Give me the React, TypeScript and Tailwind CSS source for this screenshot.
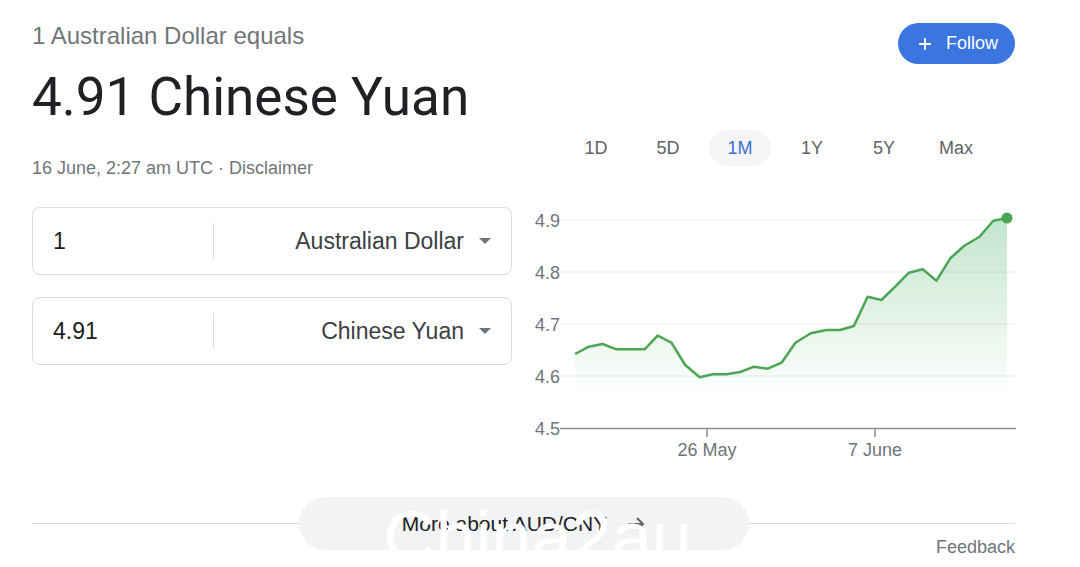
import { Plus } from "lucide-react";

const SANS = "font-['Liberation_Sans',Arial,sans-serif]";

const TABS = ["1D", "5D", "1M", "1Y", "5Y", "Max"] as const;

// chart points in svg space (page x - 520, page y - 200)
const POINTS: [number, number][] = [
  [55.1, 154], [68.8, 146.7], [82.6, 144], [96.4, 149.3], [110.1, 149.3],
  [124.6, 149.3], [137.7, 135.7], [151.4, 142.7], [165.2, 165], [179.7, 177.3],
  [192.8, 174.3], [206.5, 174.3], [220.3, 172], [234.1, 166.7], [247.8, 168.7],
  [261.6, 162.7], [275.4, 142.7], [290.8, 133.3], [306.3, 130], [320.1, 130],
  [333.9, 126], [347.6, 96.7], [361.4, 100], [375.2, 86.7], [388.9, 72.7],
  [402.7, 69.3], [416.5, 80.7], [430.3, 58.3], [444, 46], [459.5, 36.7],
  [473.3, 20.7], [487, 18],
];

const Y_LABELS = [
  { label: "4.9", y: 20 },
  { label: "4.8", y: 72 },
  { label: "4.7", y: 124 },
  { label: "4.6", y: 176 },
  { label: "4.5", y: 228 },
];

function Caret() {
  return (
    <svg width="12" height="6" viewBox="0 0 12 6" className="shrink-0">
      <path d="M0 0h12L6 6z" fill="#70757a" />
    </svg>
  );
}

function CurrencyRow({ amount, currency }: { amount: string; currency: string }) {
  return (
    <div className="flex h-[68px] items-center rounded-lg border border-[#dadce0]">
      <div className="w-[180px] pl-5 text-[23px] text-[#202124]">{amount}</div>
      <div className="h-9 w-px bg-[#dadce0]" />
      <div className="flex flex-1 items-center justify-end gap-[15px] pr-[20px]">
        <span className="text-[23px] text-[#3c4043]">{currency}</span>
        <Caret />
      </div>
    </div>
  );
}

function Chart() {
  const line = POINTS.map(([x, y], i) => `${i ? "L" : "M"}${x} ${y}`).join(" ");
  const area = `${line} L487 197 L55.1 197 Z`;
  const last = POINTS[POINTS.length - 1];
  return (
    <svg
      width={496}
      height={265}
      viewBox="0 0 496 265"
      className="mt-[34px] ml-2 block"
      fontFamily="'Liberation Sans', Arial, sans-serif"
    >
      <defs>
        <linearGradient id="area" x1="0" y1="18" x2="0" y2="197" gradientUnits="userSpaceOnUse">
          <stop offset="0" stopColor="#34a853" stopOpacity="0.3" />
          <stop offset="1" stopColor="#34a853" stopOpacity="0" />
        </linearGradient>
      </defs>
      {Y_LABELS.slice(0, 4).map((g) => (
        <line key={g.label} x1={40} x2={496} y1={g.y} y2={g.y} stroke="#f1f3f4" strokeWidth={1.5} />
      ))}
      {Y_LABELS.map((g) => (
        <text key={g.label} x={15} y={g.y + 6.5} fontSize={18} fill="#70757a">
          {g.label}
        </text>
      ))}
      <path d={area} fill="url(#area)" />
      <path d={line} fill="none" stroke="#4ca654" strokeWidth={2.5} strokeLinejoin="round" />
      <circle cx={last[0]} cy={last[1]} r={5.5} fill="#4ca654" />
      <line x1={40} x2={496} y1={228.5} y2={228.5} stroke="#8a8e93" strokeWidth={1.5} />
      <line x1={187} x2={187} y1={228} y2={237} stroke="#8a8e93" strokeWidth={1.5} />
      <line x1={355} x2={355} y1={228} y2={237} stroke="#8a8e93" strokeWidth={1.5} />
      <text x={187} y={255.5} fontSize={18} fill="#70757a" textAnchor="middle">
        26 May
      </text>
      <text x={355} y={255.5} fontSize={18} fill="#70757a" textAnchor="middle">
        7 June
      </text>
    </svg>
  );
}

export default function App() {
  return (
    <div className={`h-[567px] w-[1080px] overflow-hidden bg-white pr-[65px] pl-8 ${SANS}`}>
      <div className="grid grid-cols-[480px_minmax(0,1fr)]">
        {/* left: headline + converter */}
        <div className="pt-[22px]">
          <p className="text-[24px] leading-[28px] text-[#70757a]">1 Australian Dollar equals</p>
          <h1 className="mt-[17px] font-['Roboto',sans-serif] text-[53px] leading-[60px] text-[#202124]">
            4.91 Chinese Yuan
          </h1>
          <p className="mt-[29px] text-[18px] leading-6 text-[#70757a]">
            16 June, 2:27 am UTC · Disclaimer
          </p>
          <div className="mt-[27px] flex flex-col gap-[22px]">
            <CurrencyRow amount="1" currency="Australian Dollar" />
            <CurrencyRow amount="4.91" currency="Chinese Yuan" />
          </div>
        </div>

        {/* right: follow, range tabs, chart */}
        <div className="flex flex-col pt-[23px]">
          <div className="flex justify-end">
            <button
              type="button"
              className="flex h-[41px] items-center gap-[12px] rounded-full bg-[#3a75e0] pr-[17px] pl-[18px] text-[18px] text-white"
            >
              <Plus className="size-[18px]" strokeWidth={2.5} />
              Follow
            </button>
          </div>
          <div className="mt-[66px] ml-12 grid w-[432px] grid-cols-6">
            {TABS.map((t) => (
              <div key={t} className="flex justify-center">
                <span
                  className={
                    t === "1M"
                      ? "flex h-9 w-[62px] items-center justify-center rounded-full bg-[#f4f5f7] text-[18px] text-[#3c6fd9]"
                      : "flex h-9 w-[62px] items-center justify-center text-[18px] text-[#5f6368]"
                  }
                >
                  {t}
                </span>
              </div>
            ))}
          </div>
          <Chart />
        </div>
      </div>

      {/* more about */}
      <div className="mt-8 flex items-center">
        <div className="h-px flex-1 bg-[#dadce0]" />
        <div className="relative flex h-[53px] w-[450px] items-center justify-center gap-[20px] overflow-hidden rounded-full bg-[#f1f3f4]">
          <span className="text-[21px] text-[#202124]">More about AUD/CNY</span>
          <svg width="18" height="14" viewBox="0 0 18 14" className="shrink-0">
            <path d="M1 7h15M10 1l6 6-6 6" fill="none" stroke="#5f6368" strokeWidth="2" />
          </svg>
          <span className="pointer-events-none absolute top-[4px] left-[85px] text-[72px] leading-none text-white">
            China2au
          </span>
        </div>
        <div className="h-px flex-1 bg-[#dadce0]" />
      </div>
      <div className="-mt-[15px] flex justify-end">
        <span className="text-[18px] leading-6 text-[#70757a]">Feedback</span>
      </div>
    </div>
  );
}
